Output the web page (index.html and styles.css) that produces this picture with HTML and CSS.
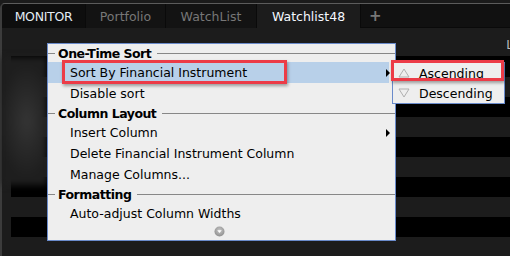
FILE: index.html
```html
<!DOCTYPE html>
<html>
<head>
<meta charset="utf-8">
<link rel="stylesheet" href="styles.css">
</head>
<body>
<div class="window">
  <div class="tabs">
    <div class="tab tab-monitor">MONITOR</div>
    <div class="tab">Portfolio</div>
    <div class="tab tab-wide">WatchList</div>
    <div class="tab tab-active">Watchlist48</div>
    <div class="tab-rest"><span class="plus">+</span></div>
  </div>
  <div class="grid">
    <div class="grid-head"><span class="col-l">L</span></div>
    <div class="row dark"></div>
    <div class="row"></div>
    <div class="row dark"></div>
    <div class="row"></div>
    <div class="row dark"></div>
    <div class="row"></div>
    <div class="row dark"></div>
    <div class="row"></div>
    <div class="row dark"></div>
    <div class="row"></div>
  </div>
  <div class="glow"></div>

  <div class="menu">
    <div class="menu-head"><span class="hl-short"></span><span class="head-text">One-Time Sort</span><span class="hl-long"></span></div>
    <div class="menu-item selected"><span>Sort By Financial Instrument</span><span class="arrow"></span></div>
    <div class="menu-item"><span>Disable sort</span></div>
    <div class="menu-head"><span class="hl-short"></span><span class="head-text">Column Layout</span><span class="hl-long"></span></div>
    <div class="menu-item"><span>Insert Column</span><span class="arrow"></span></div>
    <div class="menu-item"><span>Delete Financial Instrument Column</span></div>
    <div class="menu-item"><span>Manage Columns...</span></div>
    <div class="menu-head"><span class="hl-short"></span><span class="head-text">Formatting</span><span class="hl-long"></span></div>
    <div class="menu-item"><span>Auto-adjust Column Widths</span></div>
    <div class="menu-foot">
      <svg class="scroll-icon" width="11" height="11" viewBox="0 0 11 11">
        <defs>
          <radialGradient id="g" cx="50%" cy="40%" r="60%">
            <stop offset="0" stop-color="#c8c8c8"/>
            <stop offset="1" stop-color="#8e8e8e"/>
          </radialGradient>
        </defs>
        <circle cx="5.5" cy="5.5" r="5" fill="url(#g)"/>
        <path d="M3.3 4.3 L7.7 4.3 L5.5 7 Z" fill="#fff"/>
      </svg>
    </div>
  </div>

  <div class="submenu">
    <div class="sub-item">
      <svg class="tri" width="12" height="10" viewBox="0 0 12 10"><path d="M6 1 L11 9 L1 9 Z" fill="none" stroke="#b0b0b0" stroke-width="1"/></svg>
      <span>Ascending</span>
    </div>
    <div class="sub-item">
      <svg class="tri" width="12" height="10" viewBox="0 0 12 10"><path d="M1 1 L11 1 L6 9 Z" fill="none" stroke="#b0b0b0" stroke-width="1"/></svg>
      <span>Descending</span>
    </div>
  </div>

  <div class="callout callout-main"></div>
  <div class="callout callout-sub"></div>
</div>
</body>
</html>
```

FILE: styles.css
```css
html, body {
  margin: 0;
  padding: 0;
}
body {
  width: 510px;
  height: 256px;
  overflow: hidden;
  background: #1b1b1b;
  font-family: "DejaVu Sans", Verdana, sans-serif;
  font-size: 12.5px;
}
.window {
  position: relative;
  margin-top: 3px;
  height: 253px;
  border-top: 1px solid #5c5c5c;
  border-left: 2px solid #3c3c3c;
  border-top-left-radius: 5px;
  background: #1c1c1c;
}
.tabs {
  display: flex;
  height: 24px;
}
.tab {
  display: flex;
  align-items: center;
  justify-content: center;
  width: 79px;
  background: #131313;
  color: #777;
  border-right: 1px solid #0a0a0a;
}
.tab-monitor {
  width: 83px;
  background: #0e0e0e;
  color: #e4ecf4;
  letter-spacing: -0.3px;
  border-top-left-radius: 4px;
}
.tab-wide {
  width: 90px;
}
.tab-active {
  width: 103px;
  background: #1c1c1c;
  color: #f4f8ff;
}
.tab-rest {
  flex: 1;
  background: #111;
  border-bottom: 1px solid #0a0a0a;
  display: flex;
  align-items: center;
  padding-left: 8px;
}
.plus {
  color: #777;
  font-weight: bold;
  font-size: 15px;
}
.grid {
  display: flex;
  flex-direction: column;
  padding-left: 9px;
}
.grid-head {
  height: 28px;
  border-bottom: 1px solid #000;
  display: flex;
  justify-content: flex-end;
  align-items: flex-start;
}
.col-l {
  color: #bbb;
  margin-top: 10px;
  margin-right: -3px;
  font-size: 12px;
}
.row {
  height: 20px;
  background: #1c1c1c;
}
.row.dark {
  background: #000;
}
.glow {
  position: absolute;
  left: 0;
  top: 53px;
  width: 45px;
  height: 128px;
  background:
    radial-gradient(ellipse 60% 45% at 55% 50%, #353535 0%, #2a2a2a 45%, #1e1e1e 100%);
  filter: blur(3px);
}

.menu {
  position: absolute;
  left: 45px;
  top: 39px;
  width: 341px;
  padding-right: 6px;
  background: #eeeeee;
  border: 1px solid #6a8bcb;
  display: flex;
  flex-direction: column;
  color: #000;
}
.menu-head {
  height: 18px;
  display: flex;
  align-items: center;
  font-weight: bold;
  letter-spacing: -0.5px;
}
.hl-short {
  width: 7px;
  height: 1px;
  background: #878787;
  margin-right: 3px;
}
.hl-long {
  flex: 1;
  height: 1px;
  background: #878787;
  margin-left: 6px;
  margin-right: -6px;
}
.menu-item {
  height: 21px;
  display: flex;
  align-items: center;
  justify-content: space-between;
  padding-left: 22px;
}
.menu-item.selected {
  background: #b8d0e9;
}
.arrow {
  width: 0;
  height: 0;
  border-left: 4px solid #000;
  border-top: 4px solid transparent;
  border-bottom: 4px solid transparent;
  margin-right: -1px;
}
.menu-foot {
  height: 16px;
  display: flex;
  justify-content: center;
  align-items: flex-start;
  padding-top: 2px;
  box-sizing: border-box;
}
.scroll-icon {
  display: block;
  margin-left: 2px;
}

.submenu {
  position: absolute;
  left: 390px;
  top: 58px;
  width: 111px;
  background: #eeeeee;
  border: 1px solid #6a8bcb;
  display: flex;
  flex-direction: column;
}
.sub-item {
  height: 20px;
  display: flex;
  align-items: center;
  padding-left: 5px;
  gap: 9px;
  color: #000;
}
.tri {
  display: block;
}

.callout {
  position: absolute;
  border: 3px solid #ec3b47;
  box-shadow: 1px 2px 3px rgba(0, 0, 0, 0.35);
}
.callout-main {
  left: 60px;
  top: 56px;
  width: 219px;
  height: 18px;
}
.callout-sub {
  left: 389px;
  top: 56px;
  width: 107px;
  height: 15px;
}
```
